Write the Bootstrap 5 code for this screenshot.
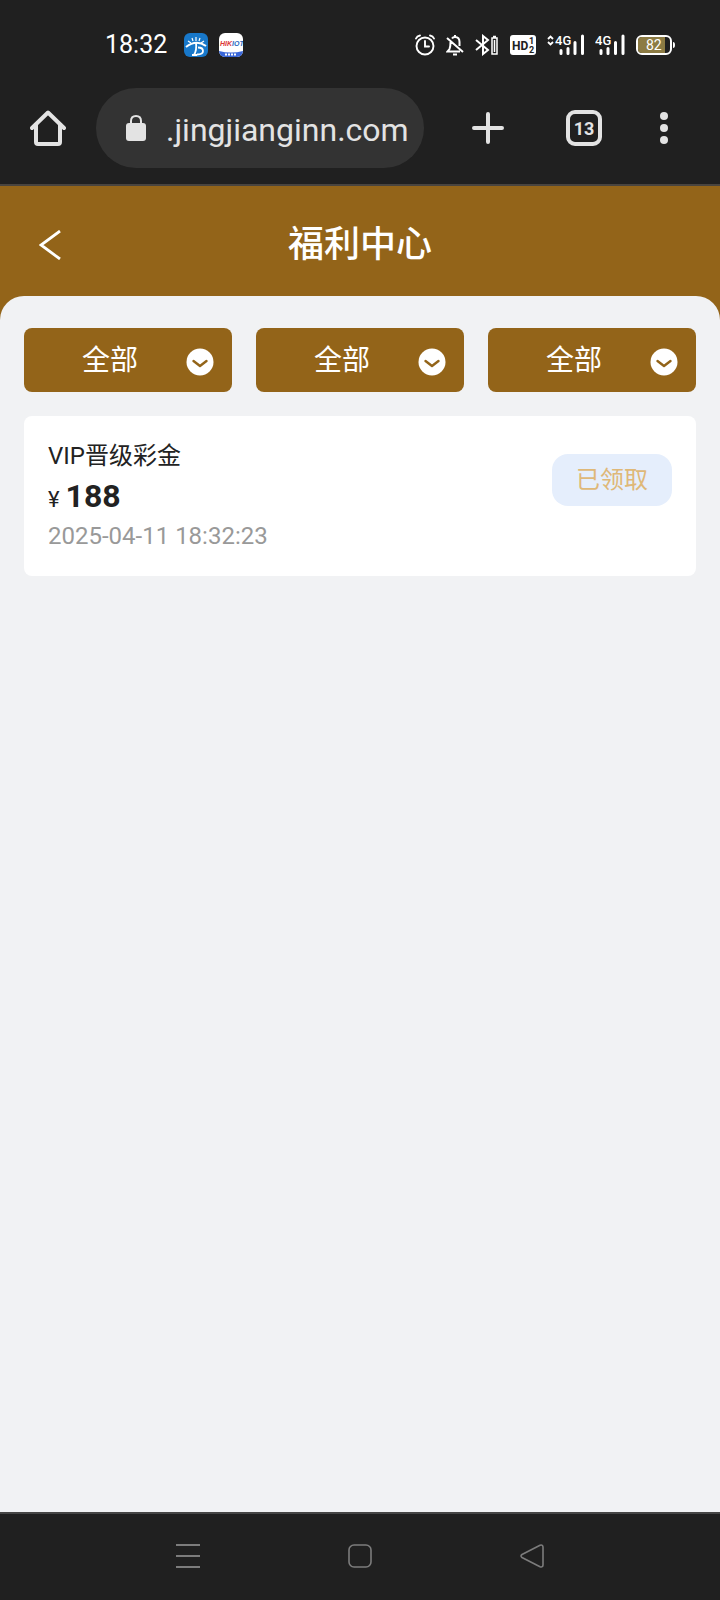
<!DOCTYPE html>
<html lang="zh-CN">
<head>
<meta charset="utf-8">
<meta name="viewport" content="width=device-width, initial-scale=1">
<title>福利中心</title>
<link href="https://cdn.jsdelivr.net/npm/bootstrap@5.3.0/dist/css/bootstrap.min.css" rel="stylesheet">
<style>
  :root { --brown: #936419; --chrome: #202020; --ink: #e3e3e3; --sheet: #f1f2f4; }
  body { font-family: Roboto, "Noto Sans CJK SC", sans-serif; font-size: 24px; background: var(--sheet); color: #222; }
  svg { display: block; flex: none; }
  .chrome-area { background: var(--chrome); color: var(--ink); }
  .status-bar { height: 88px; padding: 2px 45px 0 105px; color: #fff; }
  .clock { font-size: 25px; line-height: 32px; width: 79px; }
  .app-icons { gap: 11px; }
  .status-icons { gap: 11px; }
  .address-row { padding: 0 36px 16px 28px; border-bottom: 2px solid #49443f; }
  .icon-btn { flex: none; width: 40px; height: 40px; padding: 0; border: 0; background: none; color: var(--ink); display: flex; align-items: center; justify-content: center; }
  .address { min-width: 0; height: 80px; border-radius: 40px; background: #333; margin-left: 28px; padding: 0 16px 0 30px; gap: 20px; }
  .address input { border: 0; padding: 4px 0 0; background: none; color: var(--ink); font-size: 32px; line-height: 40px; outline: 0; min-width: 0; }
  .tools { gap: 56px; margin-left: 44px; }
  .tools .more-btn { margin-left: -16px; }
  .title-bar { background: var(--brown); color: #fff; }
  .title-row { display: grid; grid-template-columns: 40px 1fr 40px; height: 110px; padding: 8px 30px 0; align-items: center; }
  .title-row h1 { font-size: 36px; line-height: 48px; font-weight: 500; margin: 0; text-align: center; }
  .title-row a { color: #fff; height: 40px; display: flex; align-items: center; justify-content: center; }
  .sheet { background: var(--sheet); border-radius: 24px 24px 0 0; padding: 32px 24px; }
  .sheet-back { background: linear-gradient(var(--brown) 24px, var(--sheet) 24px); }
  .filter { position: relative; display: block; }
  .filter select { appearance: none; width: 100%; height: 64px; border: 0; border-radius: 8px; background: var(--brown); color: #fff; font-size: 28px; line-height: 40px; padding: 13px 36px 11px 0; text-align: center; text-align-last: center; }
  .filter svg { position: absolute; right: 18px; top: 20px; pointer-events: none; }
  .bonus { border: 0; border-radius: 8px; margin-top: 24px; padding: 20px 24px; line-height: 40px; }
  .amount-line { height: 40px; gap: 6px; }
  .amount { font-size: 32px; font-weight: 700; }
  .yen { font-size: 22px; }
  .when { color: #999; }
  .claimed, .claimed:disabled { width: 120px; height: 52px; margin-top: 18px; padding: 0; border: 0; border-radius: 16px; background: #e5eefc; color: #dfb878; font-size: 24px; line-height: 52px; opacity: 1; }
  .nav-keys { border-top: 2px solid #454545; height: 88px; padding-bottom: 2px; }
  .nav-keys button { width: 172px; color: #7c7c7c; }
</style>
</head>
<body class="min-vh-100 d-flex flex-column">

<header class="chrome-area">
  <div class="status-bar d-flex align-items-center">
    <div class="clock">18:32</div>
    <div class="app-icons d-flex">
      <svg width="24" height="24" viewBox="0 0 24 24"><rect width="24" height="24" rx="6" fill="#1878ca"/><g stroke="#fff" fill="none"><path d="M2 14Q12 6 22 13" stroke-width="2"/><path d="M12 4v4M8 5l1 3M16 5l-1 3M4 8l3 2M20 8l-3 2" stroke-width="1.2"/><path d="M12 10q1 7-2 12M8 22h5M14 14.500q5 0 5 3.500t-6 3.500" stroke-width="1.800"/></g></svg>
      <svg width="24" height="24" viewBox="0 0 24 24"><defs><clipPath id="tile"><rect width="24" height="24" rx="6"/></clipPath></defs><g clip-path="url(#tile)"><path fill="#fff" d="M0 0h24v24H0z"/><path fill="#3a67d8" d="M0 18q12 3 24 0v6H0z"/><text x="1" y="13" font-family="Liberation Sans" font-size="7" font-weight="700" font-style="italic" fill="#dc3838">HIK<tspan fill="#2768c0">IOT</tspan></text><path d="M6 21.500h12" stroke="#fff" stroke-width="2" stroke-dasharray="2 1"/></g></svg>
    </div>
    <div class="status-icons ms-auto d-flex align-items-center">
      <svg width="20" height="22" viewBox="0 0 20 22" fill="none" stroke="#fff" stroke-width="1.900"><circle cx="10" cy="12" r="8.500"/><path d="M10 7v5.500h4M1 4.500Q2 2 5 1.500M19 4.500Q18 2 15 1.500" stroke-linecap="round"/></svg>
      <svg width="18" height="22" viewBox="0 0 18 22" fill="none" stroke="#fff" stroke-width="2"><path d="M6 4.500Q7 3 9 3q4.500 0 4.500 5v4M4.500 8q0 5-1 7l-2 2.500h12.500M1 4l16 14M9 1v2"/><path d="M7 20.500h4"/></svg>
      <svg width="24" height="22" viewBox="0 0 24 22" fill="none" stroke="#fff" stroke-width="2"><path d="M1 6l12 10-5 4V2l5 4L1 16"/><path d="M17 4h5v16h-5zM18 2.500h3" stroke-width="1.500"/><path d="M19.500 6v12" stroke-width="1.500"/></svg>
      <svg width="26" height="20" viewBox="0 0 26 20"><rect width="26" height="20" rx="3" fill="#fff"/><g fill="#202020" font-family="Roboto" font-weight="700"><text x="2" y="15" font-size="12">HD</text><text x="19" y="9" font-size="9">1</text><text x="19" y="18" font-size="9">2</text></g></svg>
      <svg width="37" height="22" viewBox="0 0 37 22" fill="none" stroke="#fff"><path d="M1 5l2.500-2.500L6 5M1 8l2.500 2.500L6 8" stroke-width="1.800"/><text x="8" y="11" fill="#fff" stroke="none" font-family="Roboto" font-weight="500" font-size="13">4G</text><path d="M14 16.500v3M21 14.500v5M28 8.500v11M35.500 2v17.500" stroke-width="3" stroke-linecap="round"/></svg>
      <svg width="30" height="22" viewBox="0 0 30 22" fill="none" stroke="#fff"><text x="0" y="11" fill="#fff" stroke="none" font-family="Roboto" font-weight="500" font-size="13">4G</text><path d="M6 16.500v3M13 14.500v5M20.500 8.500v11M28 2v17.500" stroke-width="3" stroke-linecap="round"/></svg>
      <svg width="39" height="20" viewBox="0 0 39 20"><rect x="1" y="1" width="34" height="18" rx="5" fill="#202020" stroke="#fff" stroke-width="2"/><path d="M6 2h23v16H6q-4 0-4-4V6q0-4 4-4z" fill="#8c7b43"/><path d="M37 7q2 0 2 3t-2 3z" fill="#fff"/><text x="10" y="15" font-family="Roboto" font-size="14" fill="#fff">82</text></svg>
    </div>
  </div>

  <div class="address-row d-flex align-items-center">
    <button class="icon-btn" type="button" aria-label="主页"><svg width="36" height="36" viewBox="0 0 36 36" fill="none" stroke="currentColor" stroke-width="4" stroke-linejoin="round" stroke-linecap="round"><path d="M2 18L18 2.500 34 18M6 15v17q0 2 2 2h20q2 0 2-2V15"/></svg></button>
    <div class="address flex-grow-1 d-flex align-items-center">
      <svg width="20" height="26" viewBox="0 0 20 26"><rect y="8" width="20" height="18" rx="3" fill="#e3e3e3"/><path d="M5 9V6q0-5 5-5t5 5v3" fill="none" stroke="#e3e3e3" stroke-width="2"/></svg>
      <input class="flex-grow-1 text-end" type="text" size="10" aria-label="网址" value=".jingjianginn.com" readonly>
    </div>
    <div class="tools d-flex">
      <button class="icon-btn" type="button" aria-label="新标签页"><svg width="32" height="32" viewBox="0 0 32 32" stroke="currentColor" stroke-width="4" stroke-linecap="round"><path d="M2 16h28M16 2v28"/></svg></button>
      <button class="icon-btn" type="button" aria-label="标签页"><svg width="36" height="36" viewBox="0 0 36 36"><rect x="2" y="2" width="32" height="32" rx="7" fill="none" stroke="currentColor" stroke-width="4"/><text x="18" y="25" text-anchor="middle" fill="currentColor" font-family="Roboto" font-weight="700" font-size="18">13</text></svg></button>
      <button class="icon-btn more-btn" type="button" aria-label="更多"><svg width="8" height="32" viewBox="0 0 8 32" fill="currentColor"><circle cx="4" cy="4" r="4"/><circle cx="4" cy="16" r="4"/><circle cx="4" cy="28" r="4"/></svg></button>
    </div>
  </div>
</header>

<div class="title-bar">
  <div class="title-row">
    <a href="#" aria-label="返回"><svg width="22" height="30" viewBox="0 0 22 30" fill="none" stroke="currentColor" stroke-width="2.800"><path d="M21 1L2 15l19 14"/></svg></a>
    <h1>福利中心</h1>
  </div>
</div>

<div class="sheet-back flex-grow-1 d-flex">
  <main class="sheet flex-grow-1">
    <div class="row row-cols-3 gx-4">
      <div class="col"><label class="filter"><select aria-label="类型"><option>全部</option></select><svg width="28" height="28" viewBox="0 0 28 28"><circle cx="14" cy="14" r="13.500" fill="#fff"/><path d="M7.500 13l6.500 5 6.500-5" fill="none" stroke="#936419" stroke-width="2.400" stroke-linecap="round" stroke-linejoin="round"/></svg></label></div>
      <div class="col"><label class="filter"><select aria-label="状态"><option>全部</option></select><svg width="28" height="28" viewBox="0 0 28 28"><circle cx="14" cy="14" r="13.500" fill="#fff"/><path d="M7.500 13l6.500 5 6.500-5" fill="none" stroke="#936419" stroke-width="2.400" stroke-linecap="round" stroke-linejoin="round"/></svg></label></div>
      <div class="col"><label class="filter"><select aria-label="时间"><option>全部</option></select><svg width="28" height="28" viewBox="0 0 28 28"><circle cx="14" cy="14" r="13.500" fill="#fff"/><path d="M7.500 13l6.500 5 6.500-5" fill="none" stroke="#936419" stroke-width="2.400" stroke-linecap="round" stroke-linejoin="round"/></svg></label></div>
    </div>
    <article class="card bonus flex-row justify-content-between align-items-start">
      <div>
        <div>VIP晋级彩金</div>
        <div class="amount-line d-flex align-items-baseline"><span class="yen">¥</span><span class="amount">188</span></div>
        <div class="when">2025-04-11 18:32:23</div>
      </div>
      <button class="btn claimed" type="button" disabled>已领取</button>
    </article>
  </main>
</div>

<footer class="chrome-area nav-keys d-flex justify-content-center align-items-center">
  <button class="icon-btn" type="button" aria-label="任务"><svg width="24" height="24" viewBox="0 0 24 24" stroke="currentColor" stroke-width="2"><path d="M0 1h24M0 12h24M0 23h24"/></svg></button>
  <button class="icon-btn" type="button" aria-label="桌面"><svg width="24" height="24" viewBox="0 0 24 24" fill="none" stroke="currentColor" stroke-width="1.600"><rect x="1" y="1" width="22" height="22" rx="5"/></svg></button>
  <button class="icon-btn" type="button" aria-label="返回上一级"><svg width="24" height="24" viewBox="0 0 24 24" fill="none" stroke="currentColor" stroke-width="1.600"><path d="M2 10.500L20 1.300q3-1 3 2v17.400q0 3-3 2L2 13.500q-2-1.500 0-3z"/></svg></button>
</footer>

<script src="https://cdn.jsdelivr.net/npm/bootstrap@5.3.0/dist/js/bootstrap.bundle.min.js"></script>
</body>
</html>
